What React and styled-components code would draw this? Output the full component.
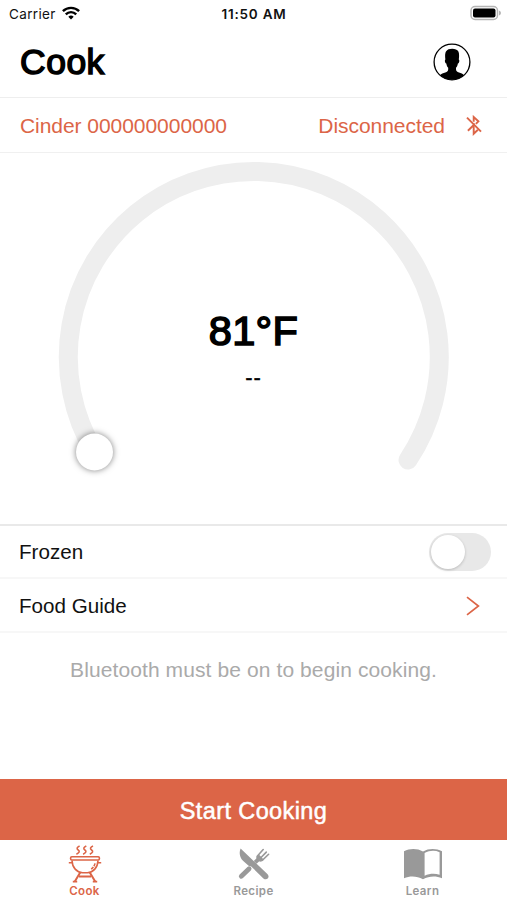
import React, { useState } from 'react';
import styled, { createGlobalStyle } from 'styled-components';

const tabs = [
  { name: 'Cook', Icon: GrillIcon },
  { name: 'Recipe', Icon: UtensilsIcon },
  { name: 'Learn', Icon: BookIcon }
];

export default function App() {
  const [frozen, setFrozen] = useState(false);
  const [activeTab, setActiveTab] = useState('Cook');

  return (
    <Screen>
      <GlobalStyle />
      <StatusBar>
        <Carrier>
          Carrier
          <WifiIcon />
        </Carrier>
        <Clock>11:50 AM</Clock>
        <BatteryIcon />
      </StatusBar>
      <Header>
        <PageTitle>Cook</PageTitle>
        <ProfileIcon />
      </Header>
      <DeviceRow>
        <span>Cinder 000000000000</span>
        <Connection>
          Disconnected
          <BluetoothOffIcon />
        </Connection>
      </DeviceRow>
      <DialArea>
        <Dial />
        <Reading>
          <Temperature>81°F</Temperature>
          <TimeLeft>--</TimeLeft>
        </Reading>
      </DialArea>
      <Row $height={53}>
        Frozen
        <Switch role="switch" aria-checked={frozen} aria-label="Frozen" $on={frozen} onClick={() => setFrozen(!frozen)}>
          <Knob />
        </Switch>
      </Row>
      <Row $height={54}>
        Food Guide
        <ChevronIcon />
      </Row>
      <Message>Bluetooth must be on to begin cooking.</Message>
      <StartButton>Start Cooking</StartButton>
      <TabBar>
        {tabs.map(({ name, Icon }) => (
          <Tab key={name} $active={activeTab === name} onClick={() => setActiveTab(name)}>
            <Icon />
            <span>{name}</span>
          </Tab>
        ))}
      </TabBar>
    </Screen>
  );
}

function WifiIcon() {
  return (
    <svg width="18" height="14" viewBox="0 0 18 14" fill="none" stroke="#000" strokeWidth="2.4">
      <path d="M0.9 5.2a11.5 11.5 0 0 1 16.2 0" />
      <path d="M3.8 8.3a7.3 7.3 0 0 1 10.4 0" />
      <path d="M6.3 10.7a3.9 3.9 0 0 1 5.4 0L9 13.4z" fill="#000" stroke="none" />
    </svg>
  );
}

function BatteryIcon() {
  return (
    <svg width="32" height="16" viewBox="0 0 32 16">
      <rect x="1" y="1.5" width="26.5" height="13" rx="4" fill="#fff" stroke="#b5b5b5" strokeWidth="1.5" />
      <rect x="3" y="3.5" width="22.5" height="9" rx="2" fill="#000" />
      <path d="M29 5.5q2 .8 2 2.5t-2 2.5z" fill="#b5b5b5" />
    </svg>
  );
}

function ProfileIcon() {
  return (
    <svg width="38" height="38" viewBox="0 0 38 38">
      <circle cx="19" cy="19" r="17.9" fill="#fff" stroke="#000" strokeWidth="1.3" />
      <path d="M7.1 32.2c1-1.3 3.3-1.8 5.2-2.6 2-.9 2.8-1.5 2.9-3.3v-1.5c-1-.9-1.6-2.4-1.9-4.3-1.4-.1-1.9-3.7-.9-4.1-.5-3-.4-6.2.6-7.8 1.2-2.2 3.4-2.9 6.2-2.9s5.2.8 6.2 2.9c.9 1.9.8 5 .4 7.8 1 .5.5 4-.9 4.1-.3 1.9-.9 3.4-1.9 4.3v1.5c.1 1.8 1 2.4 3 3.3 1.9.8 4 1.3 4.9 2.6A17.8 17.8 0 0 1 7.1 32.2z" />
    </svg>
  );
}

function BluetoothOffIcon() {
  return (
    <svg width="18" height="21" viewBox="0 0 18 21" fill="none" stroke="currentColor" strokeWidth="1.9">
      <path d="M2 2.7L16 16.7" />
      <path d="M8.7 6.8V2l4.7 4.3-2.5 2.5" />
      <path d="M2.9 15.7l5.8-5.6v8.7l4.2-4" />
    </svg>
  );
}

function ChevronIcon() {
  return (
    <svg width="14" height="20" viewBox="0 0 14 20" fill="none" stroke="#dc6547" strokeWidth="1.7">
      <path d="M1 1.2L12.4 10 1 18.8" />
    </svg>
  );
}

function Dial() {
  return (
    <svg width="507" height="371" viewBox="0 153 507 371">
      <path d="M94.5 452A185.5 185.5 0 1 1 408 460" fill="none" stroke="#eee" strokeWidth="19" strokeLinecap="round" />
      <Thumb cx="94.5" cy="452" r="18.5" />
    </svg>
  );
}

function GrillIcon() {
  return (
    <svg width="34" height="38" viewBox="0 0 34 38" fill="none" stroke="currentColor" strokeWidth="1.6">
      <path d="M11.6 1q-4.2 2 -1.4 4t-1.8 4.2M18.3 1q-4.2 2 -1.4 4t-1.8 4.2M25 1q-4.2 2 -1.4 4t-1.8 4.2" />
      <rect x="2.6" y="11.8" width="28.8" height="3.2" rx="1.2" />
      <path d="M4 17.8H.8M30 17.8h3.2M4 15.5c.2 7 4.8 11.9 10.5 12.2h5c5.7-.3 10.3-5.2 10.5-12.2" />
      <path d="M27 18.4c-.6 2.8-2.2 4.9-4.6 6.1" strokeDasharray="3 1" />
      <path d="M12.2 27.5l-5.4 9.1M21.8 27.5l5.4 9.1M11 31.4h12" strokeWidth="2" />
      <path d="M4.8 36.6h4.4M24.8 36.6h4.4" />
    </svg>
  );
}

function UtensilsIcon() {
  return (
    <svg width="34" height="34" viewBox="0 0 34 34" fill="none" stroke="currentColor" strokeLinecap="round">
      <path d="M4.3 29.3l7.8-7.6" strokeWidth="4.8" />
      <path d="M3.6 1.6C1.6 6.5 3.1 11 6 13.8l5.6 5 2.6.6 12.2 12c3.2 2.6 7-1 4.2-4.2z" fill="currentColor" stroke="none" />
      <path d="M18.2 15.4l3.1-3.1" strokeWidth="4" strokeLinecap="butt" />
      <path d="M19.2 10.1c.3 3.2 2.5 5.1 5.4 4.5l2.2-1.8-4.9-5.3z" fill="currentColor" stroke="none" />
      <path d="M20.2 9.3l6-6.8M23.3 11.3l6-6.2M25.4 13.3l6.2-6" strokeWidth="1.6" />
    </svg>
  );
}

function BookIcon() {
  return (
    <svg width="40" height="32" viewBox="0 0 40 32">
      <path d="M1 3.2C7 .2 14.5.4 20 3.5 25.5.4 33 .2 39 3.2v27c-6-2.5-13-2.3-19 1-6-3.3-13-3.5-19-1z" fill="currentColor" />
      <path d="M21.6 5c5-2.6 10.3-2.8 15-.8v22.6c-5-1.5-10-1.2-15 1z" fill="#fff" />
    </svg>
  );
}

const GlobalStyle = createGlobalStyle`
  * {
    box-sizing: border-box;
  }

  body {
    margin: 0;
    background-color: #fff;
  }

  button {
    border: none;
    padding: 0;
    background: none;
    font-family: inherit;
    cursor: pointer;
  }

  svg {
    display: block;
    flex-shrink: 0;
  }
`;

const Screen = styled.div`
  width: 507px;
  height: 900px;
  display: flex;
  flex-direction: column;
  overflow: hidden;
  background-color: #fff;
  color: #111;
  font-family: 'Liberation Sans', Arial, sans-serif;
  font-size: 21px;
`;

const StatusBar = styled.div`
  height: 28px;
  padding: 0 5px 0 9px;
  display: grid;
  grid-template-columns: 1fr auto 1fr;
  align-items: center;
  font-family: Inter, sans-serif;
  font-size: 13.5px;
  line-height: 28px;

  & > svg {
    justify-self: end;
    margin-top: -2px;
  }
`;

const Carrier = styled.div`
  display: flex;
  align-items: center;
  gap: 6px;
  letter-spacing: 0.35px;

  & svg {
    margin-top: -2px;
  }
`;

const Clock = styled.div`
  margin-right: 3px;
  font-size: 13.5px;
  font-weight: 600;
  letter-spacing: 0.8px;
`;

const Header = styled.header`
  height: 70px;
  padding: 0 36px 2px 20px;
  display: flex;
  align-items: center;
  justify-content: space-between;
  border-bottom: 1px solid #eee;
`;

const PageTitle = styled.h1`
  margin: 2px 0 0;
  font-size: 35.5px;
  font-weight: 400;
  letter-spacing: 0.5px;
  color: #000;
  -webkit-text-stroke: 1.5px #000;
`;

const DeviceRow = styled.div`
  height: 55px;
  padding: 2px 24px 0 20px;
  display: flex;
  align-items: center;
  justify-content: space-between;
  border-bottom: 1px solid #f0f0f0;
  color: #dc6547;
  letter-spacing: -0.05px;
`;

const Connection = styled.div`
  display: flex;
  align-items: center;
  gap: 20px;

  & svg {
    margin-top: -1px;
  }
`;

const DialArea = styled.div`
  height: 373px;
  display: grid;
  border-bottom: 2px solid #e9e9e9;

  & > * {
    grid-area: 1 / 1;
  }
`;

const Thumb = styled.circle`
  fill: #fff;
  filter: drop-shadow(0 0 3px rgba(0, 0, 0, 0.5));
`;

const Reading = styled.div`
  padding-top: 154px;
  text-align: center;
  color: #000;
`;

const Temperature = styled.div`
  font-size: 41.5px;
  line-height: 48px;
  letter-spacing: 0.3px;
  -webkit-text-stroke: 1.6px #000;
`;

const TimeLeft = styled.div`
  margin-top: 10px;
  font-size: 22px;
  line-height: 26px;
  letter-spacing: 0.8px;
  -webkit-text-stroke: 0.3px #000;
`;

const Row = styled.div`
  height: ${({ $height }) => $height}px;
  padding: 1px 16px 0 19px;
  display: flex;
  align-items: center;
  justify-content: space-between;
  border-bottom: 2px solid #f7f7f7;
  font-size: 20.6px;

  & > svg {
    margin-right: 11px;
  }
`;

const Switch = styled.button`
  width: 62px;
  height: 38px;
  padding: 2px;
  display: flex;
  align-items: center;
  justify-content: ${({ $on }) => ($on ? 'flex-end' : 'flex-start')};
  border-radius: 19px;
  background-color: ${({ $on }) => ($on ? '#dc6547' : '#e8e8e8')};
`;

const Knob = styled.span`
  width: 34px;
  height: 34px;
  border-radius: 50%;
  background-color: #fff;
  box-shadow: 0 1px 3px rgba(0, 0, 0, 0.2);
`;

const Message = styled.p`
  flex: 1;
  margin: 0;
  padding-top: 24px;
  text-align: center;
  line-height: 26px;
  letter-spacing: 0.1px;
  color: #aaa;
`;

const StartButton = styled.button`
  height: 61px;
  padding-top: 3px;
  background-color: #dc6547;
  color: #fff;
  font-size: 23.5px;
  letter-spacing: 0.4px;
  -webkit-text-stroke: 0.5px #fff;
`;

const TabBar = styled.nav`
  height: 60px;
  display: grid;
  grid-template-columns: repeat(3, 1fr);
`;

const Tab = styled.button`
  height: 60px;
  padding: 4px 0 1px;
  display: flex;
  flex-direction: column;
  align-items: center;
  justify-content: space-between;
  color: ${({ $active }) => ($active ? '#dc6547' : '#999')};
  font-family: Inter, sans-serif;
  font-size: 11.5px;
  font-weight: 600;
  line-height: 15px;
  letter-spacing: 0.4px;

  & svg {
    margin: auto 0;
  }
`;
